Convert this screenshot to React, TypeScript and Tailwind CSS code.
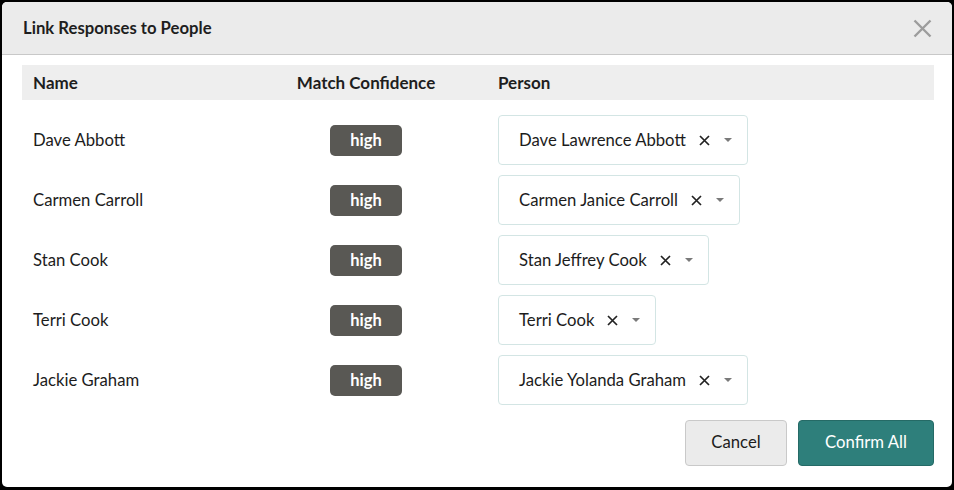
const rows = [
  { name: 'Dave Abbott', person: 'Dave Lawrence Abbott' },
  { name: 'Carmen Carroll', person: 'Carmen Janice Carroll' },
  { name: 'Stan Cook', person: 'Stan Jeffrey Cook' },
  { name: 'Terri Cook', person: 'Terri Cook' },
  { name: 'Jackie Graham', person: 'Jackie Yolanda Graham' },
];

const PersonSelect = ({ value }: { value: string }) => (
  <div className="inline-flex h-[50px] items-center rounded-[4px] border border-[#d3e5e4] bg-white pl-[20px] pr-[15px]">
    <span className="pt-[1px] text-[16.7px] text-[#1c1c1c]">{value}</span>
    <svg className="ml-[13px]" width="11" height="11" viewBox="0 0 11 11">
      <path d="M1 1L10 10M10 1L1 10" stroke="#222" strokeWidth="1.7" />
    </svg>
    <svg className="ml-[14px]" width="8" height="4" viewBox="0 0 8 4">
      <path d="M0 0H8L4 4Z" fill="#7a7a7a" />
    </svg>
  </div>
);

export default function App() {
  return (
    <div className="h-[490px] w-[954px] bg-black pl-[2px] pt-[2px] font-['Lato',sans-serif]">
      <div className="flex h-[485px] w-[950px] flex-col overflow-hidden rounded-[5px] bg-white">
        <div className="flex h-[53px] items-center justify-between border-b border-[#c8c8c8] bg-[#ebebeb] pl-[21px] pr-[20px]">
          <h1 className="pt-[2px] text-[16.7px] font-bold text-[#1e1e1e]">Link Responses to People</h1>
          <svg width="19" height="19" viewBox="0 0 19 19">
            <path d="M1.5 1.5L17.5 17.5M17.5 1.5L1.5 17.5" stroke="#9c9c9c" strokeWidth="2.4" />
          </svg>
        </div>

        <div className="flex flex-1 flex-col pl-[20px] pr-[18px] pt-[10px]">
          <div className="grid h-[35px] grid-cols-[223px_242px_1fr] items-center bg-[#eeeeee] text-[17px] font-bold text-[#1e1e1e]">
            <div className="pl-[11px]">Name</div>
            <div className="text-center">Match Confidence</div>
            <div className="pl-[11px]">Person</div>
          </div>

          <div className="pt-[10px]">
            {rows.map((r) => (
              <div key={r.name} className="grid h-[60px] grid-cols-[223px_242px_1fr] items-center text-[16.7px] text-[#1c1c1c]">
                <div className="pl-[11px] pt-[1px]">{r.name}</div>
                <div className="flex justify-center">
                  <span className="flex h-[31px] w-[72px] items-center justify-center rounded-[5px] bg-[#595854] text-[16.5px] font-bold text-white">
                    high
                  </span>
                </div>
                <div className="pl-[11px]">
                  <PersonSelect value={r.person} />
                </div>
              </div>
            ))}
          </div>

          <div className="mt-[10px] flex justify-end gap-[11px]">
            <button className="h-[46px] w-[102px] rounded-[4px] border border-[#c9c9c9] bg-[#ebebeb] text-[16.7px] text-[#1c1c1c]">
              Cancel
            </button>
            <button className="h-[46px] w-[136px] rounded-[4px] border border-[#256a66] bg-[#2e7f7b] text-[16.7px] text-white">
              Confirm All
            </button>
          </div>
        </div>
      </div>
    </div>
  );
}
